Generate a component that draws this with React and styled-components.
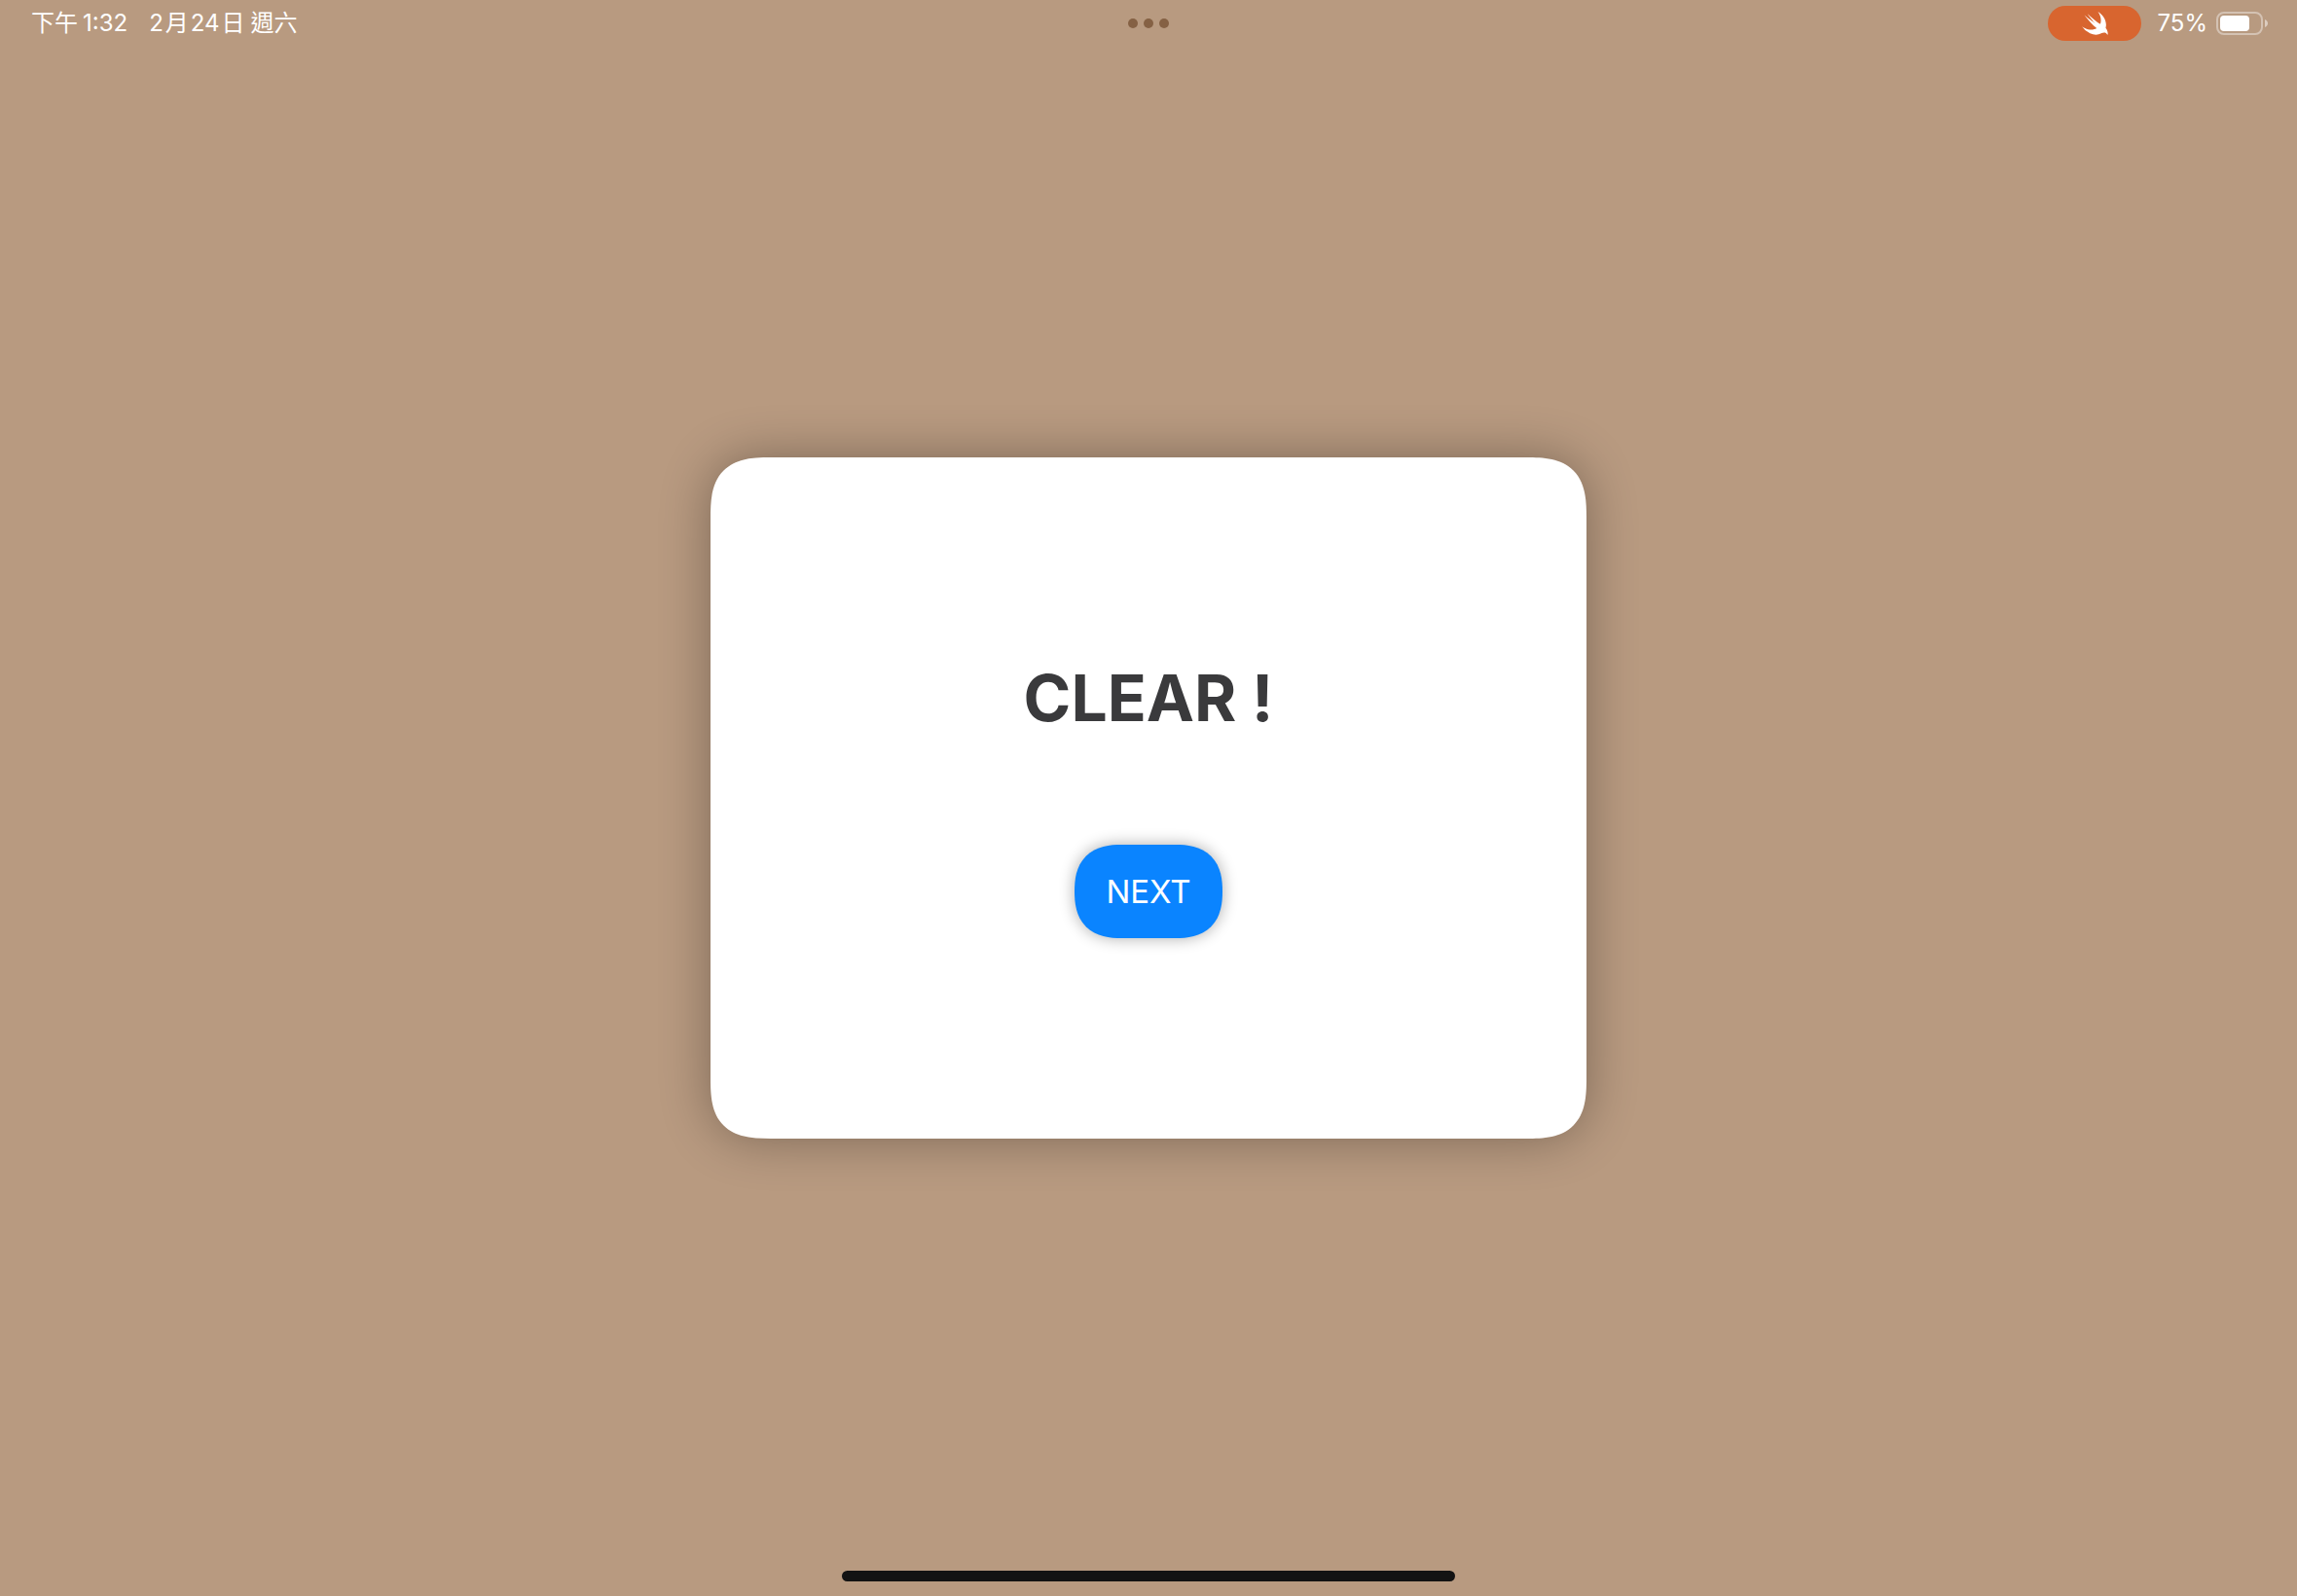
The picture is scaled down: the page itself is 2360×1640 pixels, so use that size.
import React from "react";
import styled, { createGlobalStyle, css } from "styled-components";

const GlobalStyle = createGlobalStyle`
  *, *::before, *::after { box-sizing: border-box; }
  body {
    margin: 0;
    background: #b89a80;
    font-family: Inter, "Noto Sans CJK TC", sans-serif;
  }
`;

/* Continuous corners where the browser can draw them, plain rounding elsewhere. */
const continuousCorners = (plain, smooth, curve) => css`
  border-radius: ${plain}px;
  @supports (corner-shape: superellipse(${curve})) {
    border-radius: ${smooth}px;
    corner-shape: superellipse(${curve});
  }
`;

const Screen = styled.div`
  display: flex;
  flex-direction: column;
  min-height: 100vh;
`;

const StatusBar = styled.header`
  display: grid;
  grid-template-columns: 1fr auto 1fr;
  align-items: center;
  height: 48px;
  padding: 0 30px;
  color: #fff;
  font-size: 24px;
  line-height: 32px;
`;

const DateTime = styled.div`
  display: flex;
  gap: 22px;
  padding-left: 2px;
  white-space: nowrap;
`;

const Time = styled.span`
  display: flex;
  gap: 5px;
`;

const DateText = styled.span`
  display: flex;
  gap: 2px;
`;

const Weekday = styled.span`
  margin-left: 4px;
`;

const MultitaskButton = styled.button`
  display: flex;
  gap: 6px;
  padding: 8px;
  border: 0;
  background: none;
`;

const Dot = styled.span`
  width: 10px;
  height: 10px;
  border-radius: 50%;
  background: #856144;
`;

const Indicators = styled.div`
  display: flex;
  align-items: center;
  justify-content: flex-end;
`;

const AppPill = styled.button`
  display: flex;
  align-items: center;
  justify-content: center;
  width: 96px;
  height: 36px;
  margin-right: 16px;
  padding: 0;
  border: 0;
  border-radius: 18px;
  background: #d8652f;
  color: #fff;
`;

const BatteryIcon = styled.svg`
  margin-left: 9px;
`;

const Stage = styled.main`
  flex: 1;
  display: flex;
  align-items: center;
  justify-content: center;
`;

const Card = styled.section`
  display: flex;
  flex-direction: column;
  align-items: center;
  justify-content: center;
  gap: 110px;
  width: 900px;
  max-width: 90%;
  min-height: 700px;
  background: #fff;
  box-shadow: 0 0 52px rgba(0, 0, 0, 0.33);
  ${continuousCorners(42, 62, 1.5)}
`;

const Title = styled.h1`
  margin: 0;
  color: #3a3a3c;
  font-size: 66px;
  font-weight: 700;
  line-height: 82px;
`;

const NextButton = styled.button`
  padding: 28px 32px;
  border: 0;
  background: #0a84ff;
  box-shadow: 0 0 16px rgba(0, 0, 0, 0.33);
  color: #fff;
  font-family: inherit;
  font-size: 33px;
  font-weight: 400;
  line-height: 40px;
  ${continuousCorners(40, 48, 1.3)}
`;

const HomeArea = styled.footer`
  display: flex;
  justify-content: center;
  height: 48px;
  padding-top: 22px;
`;

const HomeIndicator = styled.div`
  width: 630px;
  height: 11px;
  border-radius: 6px;
  background: #131313;
`;

function SwiftBird() {
  return (
    <svg width="27" height="24" viewBox="2.4 3.4 18.3 16.4" fill="currentColor" aria-hidden="true">
      <path d="M13.543 3.41c4.114 2.47 6.545 7.162 5.549 11.131-.024.093-.05.181-.076.272l.002.001c2.062 2.538 1.5 5.258 1.236 4.745-1.072-2.086-3.066-1.568-4.088-1.043a6.803 6.803 0 0 1-.281.158l-.02.012-.002.002c-2.115 1.123-4.957 1.205-7.812-.022a12.568 12.568 0 0 1-5.64-4.838c.649.48 1.35.902 2.097 1.252 3.019 1.414 6.051 1.311 8.197-.002C9.651 12.73 7.101 9.67 5.146 7.191a10.628 10.628 0 0 1-1.005-1.384c2.34 2.142 6.038 4.83 7.365 5.576C8.69 8.408 6.208 4.743 6.324 4.86c4.436 4.466 8.527 6.996 8.527 6.996.154.085.27.154.36.213.085-.215.16-.437.224-.668.708-2.588-.09-5.548-1.893-7.992z" />
    </svg>
  );
}

function Battery({ level }) {
  return (
    <BatteryIcon width="53" height="24" viewBox="0 0 53 24" aria-hidden="true">
      <rect x="1" y="1" width="46" height="22" rx="7" fill="none" stroke="#fff" strokeOpacity="0.4" strokeWidth="2" />
      <rect x="4" y="4" width={40 * level} height="16" rx="4" fill="#fff" />
      <path d="M50 8c2 .8 3 2.300 3 4s-1 3.200-3 4z" fill="#fff" fillOpacity="0.5" />
    </BatteryIcon>
  );
}

export default function App() {
  return (
    <>
      <GlobalStyle />
      <Screen>
        <StatusBar>
          <DateTime>
            <Time>
              <span>下午</span>
              <span>1:32</span>
            </Time>
            <DateText>
              <span>2</span>
              <span>月</span>
              <span>24</span>
              <span>日</span>
              <Weekday>週六</Weekday>
            </DateText>
          </DateTime>
          <MultitaskButton aria-label="多工處理">
            <Dot />
            <Dot />
            <Dot />
          </MultitaskButton>
          <Indicators>
            <AppPill aria-label="Swift Playgrounds">
              <SwiftBird />
            </AppPill>
            <span>75%</span>
            <Battery level={0.75} />
          </Indicators>
        </StatusBar>
        <Stage>
          <Card>
            <Title>CLEAR !</Title>
            <NextButton>NEXT</NextButton>
          </Card>
        </Stage>
        <HomeArea>
          <HomeIndicator />
        </HomeArea>
      </Screen>
    </>
  );
}
